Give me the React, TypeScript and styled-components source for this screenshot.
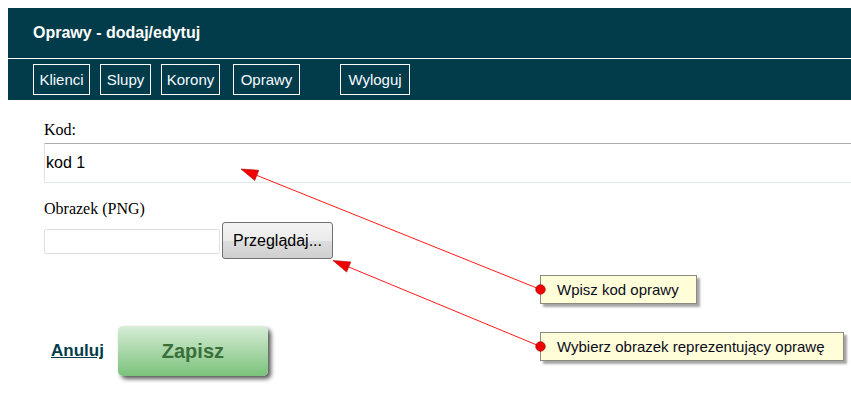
import React from 'react';
import styled, { createGlobalStyle } from 'styled-components';

const Global = createGlobalStyle`
  html, body { margin: 0; padding: 0; background: #fff; overflow: hidden; }
  * { box-sizing: border-box; }
`;

const Page = styled.div`
  position: relative;
  width: 100%;
  height: 401px;
  padding: 8px 0 0 8px;
  overflow: hidden;
`;

const Header = styled.header`
  background: #023c4b;
`;

const TitleBar = styled.div`
  height: 51px;
  display: flex;
  align-items: center;
  padding-left: 25px;
  border-bottom: 1px solid #fff;
  font: bold 16px "Liberation Sans", Arial, sans-serif;
  color: #fff;
`;

const Nav = styled.nav`
  height: 41px;
  display: flex;
  align-items: center;
  padding-left: 25px;
`;

const NavItem = styled.a<{ $w: number; $gap: number }>`
  display: block;
  width: ${p => p.$w}px;
  margin-left: ${p => p.$gap}px;
  height: 31px;
  border: 1px solid #fff;
  text-align: center;
  font: 15px "Liberation Sans", Arial, sans-serif;
  line-height: 29px;
  color: #f4fbff;
  text-decoration: none;
`;

const Content = styled.main`
  padding: 21px 0 0 36px;
  overflow: hidden;
`;

const Label = styled.label<{ $top?: number }>`
  display: block;
  margin-top: ${p => p.$top ?? 0}px;
  font: 16px "Liberation Serif", "Times New Roman", serif;
  line-height: 18px;
  color: #000;
`;

const TextInput = styled.input`
  display: block;
  margin-top: 4px;
  width: calc(100% + 4px);
  height: 40px;
  padding: 0 1px;
  border: 1px solid;
  border-color: #abadb3 #e2e3ea #e3e9ef #e2e3ea;
  font: 16px "Liberation Sans", Arial, sans-serif;
  color: #000;
  outline: none;
`;

const FileRow = styled.div`
  display: flex;
  align-items: center;
  margin-top: 4px;
`;

const FileText = styled.div`
  width: 176px;
  height: 25px;
  margin-right: 2px;
  margin-top: 2px;
  border: 1px solid #dde0e6;
  border-radius: 2px;
`;

const BrowseButton = styled.button`
  width: 111px;
  height: 37px;
  padding: 0;
  border: 1px solid #707070;
  border-radius: 3px;
  background: linear-gradient(#f3f3f3 0%, #ebebeb 50%, #dddddd 51%, #cfcfcf 100%);
  font: 16px "Liberation Sans", Arial, sans-serif;
  color: #000;
`;

const Actions = styled.div`
  display: flex;
  align-items: center;
  margin-top: 67px;
  padding-bottom: 8px;
`;

const CancelLink = styled.a`
  margin-left: 7px;
  margin-right: 14px;
  font: bold 17px "Liberation Sans", Arial, sans-serif;
  color: #023c4b;
  text-decoration: underline;
`;

const SaveButton = styled.button`
  width: 150px;
  height: 50px;
  border: none;
  border-radius: 5px;
  background: linear-gradient(#d6edd6, #7bc27b);
  box-shadow: 3px 3px 4px rgba(0, 0, 0, 0.65);
  font: bold 20px "Liberation Sans", Arial, sans-serif;
  color: #3b6f3a;
`;

const Callout = styled.div<{ $x: number; $y: number; $w: number }>`
  position: absolute;
  left: ${p => p.$x}px;
  top: ${p => p.$y}px;
  width: ${p => p.$w}px;
  height: 29px;
  padding-left: 16px;
  display: flex;
  align-items: center;
  background: #fffed8;
  border: 1px solid #8a8a80;
  box-shadow: 3px 3px 2px rgba(0, 0, 0, 0.35);
  font: 15px "Liberation Sans", Arial, sans-serif;
  color: #0c0c1c;
`;

const Overlay = styled.svg`
  position: absolute;
  left: 0;
  top: 0;
  pointer-events: none;
`;

type ArrowProps = { x1: number; y1: number; x2: number; y2: number };

const Arrow = ({ x1, y1, x2, y2 }: ArrowProps) => {
  const dx = x1 - x2;
  const dy = y1 - y2;
  const len = Math.hypot(dx, dy);
  const ux = dx / len;
  const uy = dy / len;
  const hl = 17;
  const hw = 5.5;
  const bx = x2 + ux * hl;
  const by = y2 + uy * hl;
  const p1 = `${bx - uy * hw},${by + ux * hw}`;
  const p2 = `${bx + uy * hw},${by - ux * hw}`;
  return (
    <g>
      <line x1={x1} y1={y1} x2={bx} y2={by} stroke="#ff1a1a" strokeWidth={1} />
      <polygon points={`${x2},${y2} ${p1} ${p2}`} fill="#f00000" stroke="#b00000" strokeWidth={0.6} />
      <circle cx={x1} cy={y1} r={4.7} fill="#f00000" stroke="#a00000" strokeWidth={0.8} />
    </g>
  );
};

export default function App() {
  return (
    <>
      <Global />
      <Page>
        <Header>
          <TitleBar>Oprawy - dodaj/edytuj</TitleBar>
          <Nav>
            <NavItem $w={57} $gap={0}>Klienci</NavItem>
            <NavItem $w={51} $gap={10}>Slupy</NavItem>
            <NavItem $w={59} $gap={10}>Korony</NavItem>
            <NavItem $w={67} $gap={13}>Oprawy</NavItem>
            <NavItem $w={70} $gap={40}>Wyloguj</NavItem>
          </Nav>
        </Header>
        <Content>
          <Label>Kod:</Label>
          <TextInput defaultValue="kod 1" readOnly />
          <Label $top={17}>Obrazek (PNG)</Label>
          <FileRow>
            <FileText />
            <BrowseButton>Przeglądaj...</BrowseButton>
          </FileRow>
          <Actions>
            <CancelLink>Anuluj</CancelLink>
            <SaveButton>Zapisz</SaveButton>
          </Actions>
        </Content>
        <Callout $x={540} $y={275} $w={157}>Wpisz kod oprawy</Callout>
        <Callout $x={540} $y={332} $w={304}>Wybierz obrazek reprezentujący oprawę</Callout>
        <Overlay width={851} height={401}>
          <Arrow x1={540.5} y1={289.5} x2={241} y2={169} />
          <Arrow x1={540.5} y1={346.5} x2={333} y2={260.5} />
        </Overlay>
      </Page>
    </>
  );
}
